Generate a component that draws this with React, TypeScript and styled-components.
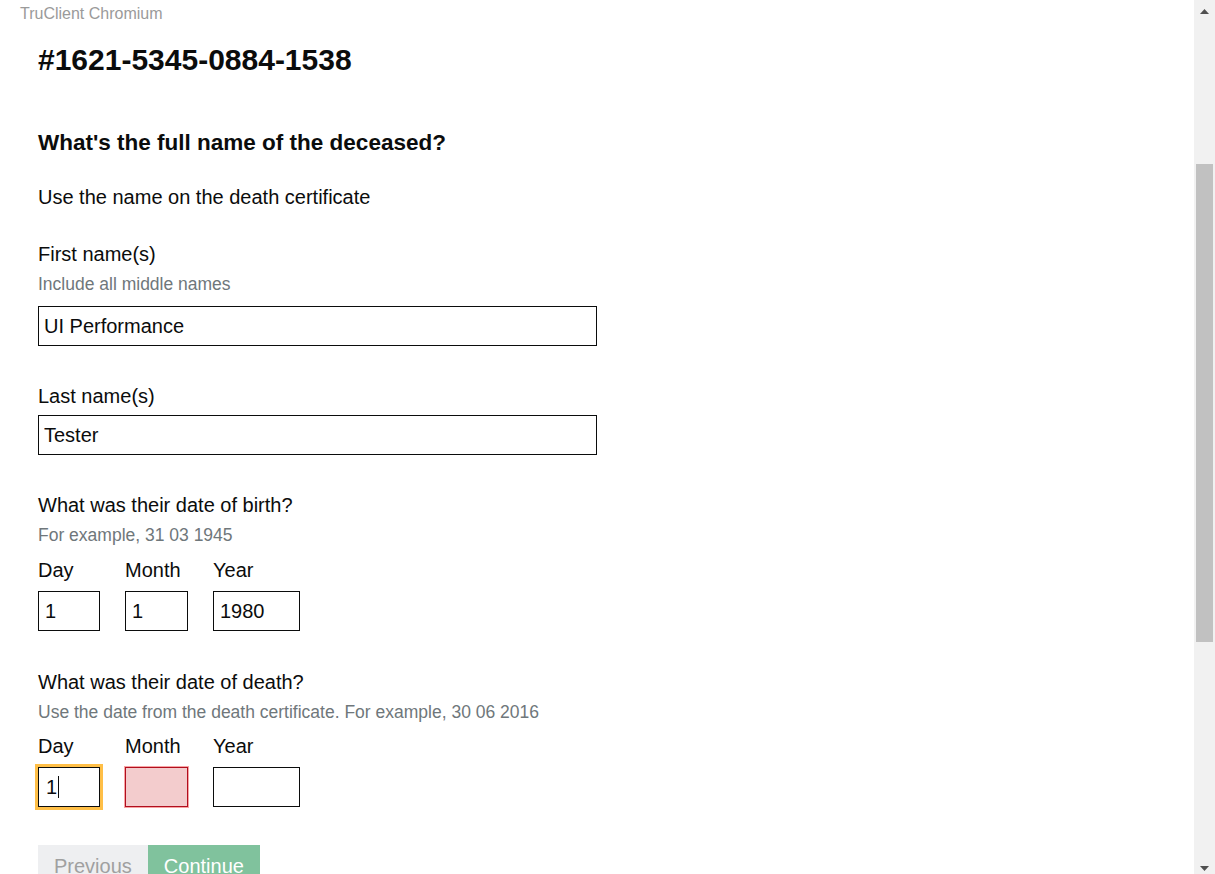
import React from "react";
import styled, { createGlobalStyle } from "styled-components";

const Global = createGlobalStyle`
  html, body { margin: 0; padding: 0; background: #fff; }
  body { font-family: "Liberation Sans", Arial, sans-serif; color: #0b0c0c; }
  * { box-sizing: border-box; }
`;

const Frame = styled.div`
  display: flex;
  width: 1215px;
  height: 874px;
  overflow: hidden;
`;

const Viewport = styled.div`
  flex: 1;
  display: flex;
  flex-direction: column;
  min-width: 0;
`;

const AppTitle = styled.div`
  height: 28px;
  line-height: 28px;
  padding-left: 20px;
  font-size: 16px;
  color: #9a9a9a;
`;

const Content = styled.main`
  padding-left: 38px;
  display: flex;
  flex-direction: column;
  align-items: flex-start;
`;

const Reference = styled.h1`
  margin: 14px 0 0;
  font-size: 30px;
  line-height: 36px;
  font-weight: 700;
  color: #0b0c0c;
`;

const Question = styled.h2`
  margin: 51px 0 0;
  font-size: 22.5px;
  line-height: 28px;
  font-weight: 700;
`;

const Lead = styled.p`
  margin: 26px 0 0;
  font-size: 20px;
  line-height: 28px;
`;

const Label = styled.label<{ $gap: number }>`
  display: block;
  margin-top: ${(p) => p.$gap}px;
  font-size: 20px;
  line-height: 26px;
`;

const Hint = styled.div`
  margin-top: 5px;
  font-size: 17.5px;
  line-height: 24px;
  color: #6f777b;
`;

const TextInput = styled.input<{ $gap: number }>`
  display: block;
  margin-top: ${(p) => p.$gap}px;
  width: 559px;
  height: 40px;
  padding: 0 5px;
  border: 1px solid #0b0c0c;
  border-radius: 0;
  font-family: "Liberation Sans", Arial, sans-serif;
  font-size: 20px;
  color: #0b0c0c;
  background: #fff;
  outline: none;
`;

const DateRow = styled.div<{ $gap: number }>`
  display: flex;
  gap: 25px;
  margin-top: ${(p) => p.$gap}px;
`;

const DateItem = styled.div`
  display: flex;
  flex-direction: column;
  gap: 8px;
`;

const DateLabel = styled.label`
  font-size: 20px;
  line-height: 26px;
`;

const DateInput = styled.input<{ $w: number; $state?: "error" }>`
  width: ${(p) => p.$w}px;
  height: 40px;
  padding: 0 6px;
  border: 1px solid ${(p) => (p.$state === "error" ? "#b10e1e" : "#0b0c0c")};
  border-radius: 0;
  font-family: "Liberation Sans", Arial, sans-serif;
  font-size: 20px;
  color: #0b0c0c;
  background: ${(p) => (p.$state === "error" ? "#f3cccd" : "#fff")};
  outline: none;
  box-shadow: ${(p) => (p.$state === "error" ? "0 0 0 1px rgba(240, 90, 90, 0.55)" : "none")};
`;

const Caret = styled.span`
  display: inline-block;
  width: 1px;
  height: 22px;
  background: #0b0c0c;
  vertical-align: middle;
  margin-left: 1px;
`;

const FocusBox = styled.div`
  width: 62px;
  height: 40px;
  padding: 0 7px;
  border: 1px solid #0b0c0c;
  outline: 3px solid #ffbf47;
  display: flex;
  align-items: center;
  font-size: 20px;
  background: #fff;
`;

const Actions = styled.div`
  display: flex;
  margin-top: 38px;
`;

const Button = styled.button<{ $primary?: boolean }>`
  height: 42px;
  padding: 9px 16px 0;
  border: none;
  border-radius: 0;
  font-family: "Liberation Sans", Arial, sans-serif;
  font-size: 20px;
  line-height: 24px;
  align-self: flex-start;
  display: flex;
  align-items: flex-start;
  background: ${(p) => (p.$primary ? "#80c29d" : "#eeeff1")};
  color: ${(p) => (p.$primary ? "#ffffff" : "#a0a0a0")};
  cursor: pointer;
`;

const Scrollbar = styled.div`
  width: 21px;
  height: 874px;
  background: #f1f1f1;
  display: flex;
  flex-direction: column;
  align-items: center;
`;

const Arrow = styled.div`
  height: 17px;
  width: 17px;
  display: flex;
  align-items: center;
  justify-content: center;
  padding-top: 6px;
`;

const Track = styled.div`
  flex: 1;
  width: 17px;
  padding-top: 147px;
  padding-bottom: 215px;
  display: flex;
`;

const Thumb = styled.div`
  flex: 1;
  background: #c1c1c1;
`;

function Tri({ dir }: { dir: "up" | "down" }) {
  return (
    <svg width="9" height="5" viewBox="0 0 9 5">
      {dir === "up" ? (
        <polygon points="0,5 9,5 4.5,0" fill="#505050" />
      ) : (
        <polygon points="0,0 9,0 4.5,5" fill="#505050" />
      )}
    </svg>
  );
}

export default function App() {
  return (
    <>
      <Global />
      <Frame>
        <Viewport>
          <AppTitle>TruClient Chromium</AppTitle>
          <Content>
            <Reference>#1621-5345-0884-1538</Reference>
            <Question>What's the full name of the deceased?</Question>
            <Lead>Use the name on the death certificate</Lead>

            <Label $gap={30}>First name(s)</Label>
            <Hint>Include all middle names</Hint>
            <TextInput $gap={10} defaultValue="UI Performance" />

            <Label $gap={37}>Last name(s)</Label>
            <TextInput $gap={6} defaultValue="Tester" />

            <Label $gap={37}>What was their date of birth?</Label>
            <Hint>For example, 31 03 1945</Hint>
            <DateRow $gap={10}>
              <DateItem>
                <DateLabel>Day</DateLabel>
                <DateInput $w={62} defaultValue="1" />
              </DateItem>
              <DateItem>
                <DateLabel>Month</DateLabel>
                <DateInput $w={63} defaultValue="1" />
              </DateItem>
              <DateItem>
                <DateLabel>Year</DateLabel>
                <DateInput $w={87} defaultValue="1980" />
              </DateItem>
            </DateRow>

            <Label $gap={38}>What was their date of death?</Label>
            <Hint>Use the date from the death certificate. For example, 30 06 2016</Hint>
            <DateRow $gap={9}>
              <DateItem>
                <DateLabel>Day</DateLabel>
                <FocusBox>
                  1<Caret />
                </FocusBox>
              </DateItem>
              <DateItem>
                <DateLabel>Month</DateLabel>
                <DateInput $w={63} $state="error" defaultValue="" />
              </DateItem>
              <DateItem>
                <DateLabel>Year</DateLabel>
                <DateInput $w={87} defaultValue="" />
              </DateItem>
            </DateRow>

            <Actions>
              <Button>Previous</Button>
              <Button $primary>Continue</Button>
            </Actions>
          </Content>
        </Viewport>
        <Scrollbar>
          <Arrow>
            <Tri dir="up" />
          </Arrow>
          <Track>
            <Thumb />
          </Track>
          <Arrow>
            <Tri dir="down" />
          </Arrow>
        </Scrollbar>
      </Frame>
    </>
  );
}
